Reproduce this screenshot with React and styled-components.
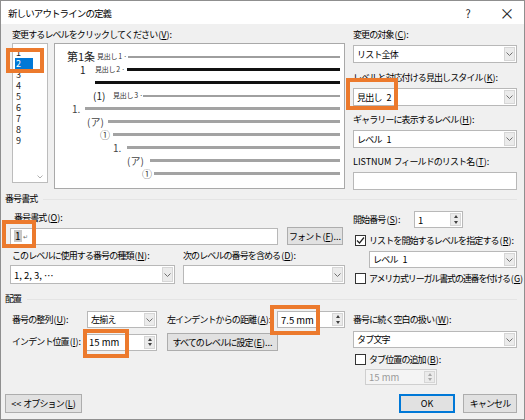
import React from 'react'
import styled, { createGlobalStyle } from 'styled-components'

const GlobalStyle = createGlobalStyle`
  html, body {
    margin: 0;
    padding: 0;
    background: #f0f0f0;
  }
  body {
    font-family: "Noto Sans CJK JP", "Noto Sans", sans-serif;
    font-size: 9px;
    letter-spacing: -0.9px;
    color: #000;
  }
  * {
    box-sizing: border-box;
  }
`

const Window = styled.div`
  width: 525px;
  height: 420px;
  background: #f0f0f0;
  border: 1px solid #8f8f8f;
  display: flex;
  flex-direction: column;
  overflow: hidden;
`

const TitleBar = styled.div`
  height: 23px;
  flex: none;
  background: #fff;
  display: flex;
  align-items: center;
  padding-left: 7px;
`

const TitleText = styled.div`
  flex: 1;
  font-size: 9.5px;
`

const TitleButton = styled.div`
  width: ${p => p.$w}px;
  text-align: center;
  font-size: ${p => p.$size}px;
  letter-spacing: 0;
  color: #222;
`

const Body = styled.div`
  flex: 1;
  display: flex;
  flex-direction: column;
  padding: 4px 7px 6px 11px;
`

const TwoCols = styled.div`
  display: grid;
  grid-template-columns: 333px 164px;
  column-gap: 8px;
  align-items: start;
`

const Col = styled.div`
  display: flex;
  flex-direction: column;
`

const Label = styled.div`
  line-height: 14px;
  height: 14px;
  white-space: nowrap;
  margin-left: ${p => p.$ml || 0}px;
  margin-top: ${p => p.$mt || 0}px;
  margin-bottom: ${p => p.$mb || 0}px;
  width: ${p => (p.$w ? p.$w + 'px' : 'auto')};
  flex: none;
`

const Lat = styled.span`
  letter-spacing: 0;
`

const KeyWrap = styled.span`
  letter-spacing: 0;
  margin-left: 1px;
  u {
    text-decoration: underline;
  }
`

const Key = ({ k, colon }) => (
  <KeyWrap>
    (<u>{k}</u>){colon ? ':' : ''}
  </KeyWrap>
)

const LevelRow = styled.div`
  display: flex;
  gap: 6px;
  margin-top: 1px;
`

const LevelList = styled.div`
  position: relative;
  width: 36px;
  height: 140px;
  background: #fff;
  border: 1px solid #bcbcbc;
  padding-top: 3px;
`

const LevelItem = styled.div`
  height: 11px;
  line-height: 11px;
  font-size: 9px;
  letter-spacing: 0;
  margin-left: 2px;
  padding-left: 1px;
  width: 18px;
  background: ${p => (p.$selected ? '#0078d7' : 'transparent')};
  color: ${p => (p.$selected ? '#fff' : '#222')};
`

const ListChevron = styled.div`
  position: absolute;
  right: 4px;
  bottom: 3px;
  display: flex;
`

const Preview = styled.div`
  flex: 1;
  height: 146px;
  background: #fff;
  border: 1px solid #a9a9a9;
  padding: 6px 4px 0 0;
`

const PreviewRow = styled.div`
  display: flex;
  align-items: center;
  height: 13px;
  padding-left: ${p => p.$indent}px;
`

const NumCell = styled.span`
  width: ${p => p.$w}px;
  flex: none;
  font-size: ${p => p.$size || 10}px;
  letter-spacing: 0;
  line-height: 13px;
  color: ${p => p.$color || '#444'};
  white-space: nowrap;
`

const TinyCell = styled.span`
  width: ${p => p.$w}px;
  flex: none;
  font-size: 7px;
  letter-spacing: -0.3px;
  line-height: 13px;
  color: #333;
  white-space: nowrap;
`

const Rule = styled.div`
  flex: 1;
  height: ${p => p.$thick}px;
  background: ${p => p.$color};
`

const Field = styled.div`
  display: flex;
  margin-bottom: ${p => p.$mb || 0}px;
  flex-direction: column;
`

const SelectBox = styled.div`
  position: relative;
  display: flex;
  height: ${p => p.$h || 18}px;
  width: ${p => (p.$w ? p.$w + 'px' : 'auto')};
  margin-left: ${p => p.$ml || 0}px;
  background: #fff;
  border: 1px solid #b8b8b8;
  flex: none;
`

const Value = styled.div`
  flex: 1;
  display: flex;
  align-items: center;
  padding-left: 3px;
  white-space: pre;
  font-size: ${p => (p.$latin ? '9.5px' : '9px')};
  letter-spacing: ${p => (p.$latin ? '0' : '-0.8px')};
  color: ${p => (p.$disabled ? '#9a9a9a' : '#000')};
`

const ArrowBox = styled.div`
  width: 11px;
  margin: 1px;
  background: #ebebeb;
  border: 1px solid #d6d6d6;
  display: flex;
  align-items: center;
  justify-content: center;
`

const SpinBox = styled(SelectBox)`
  background: ${p => (p.$disabled ? '#f4f4f4' : '#fff')};
  border-color: ${p => (p.$disabled ? '#cfcfcf' : '#b8b8b8')};
`

const SpinButtons = styled.div`
  width: 11px;
  margin: 1px;
  display: flex;
  flex-direction: column;
  background: #ebebeb;
  border: 1px solid #d6d6d6;
`

const SpinHalf = styled.div`
  flex: 1;
  display: flex;
  align-items: center;
  justify-content: center;
  &::before {
    content: '';
    border-left: 2.5px solid transparent;
    border-right: 2.5px solid transparent;
    ${p => (p.$up ? 'border-bottom' : 'border-top')}: 3px solid ${p => (p.$disabled ? '#a8a8a8' : '#404040')};
  }
`

const Button = styled.div`
  flex: none;
  width: ${p => p.$w}px;
  height: ${p => p.$h || 19}px;
  margin-left: ${p => p.$ml || 0}px;
  display: flex;
  align-items: center;
  justify-content: center;
  background: #e1e1e1;
  border: ${p => (p.$default ? '2px solid #0078d7' : '1px solid #adadad')};
  white-space: pre;
`

const Highlight = styled.div`
  position: absolute;
  left: ${p => p.$x}px;
  top: ${p => p.$y}px;
  width: ${p => p.$w}px;
  height: ${p => p.$h}px;
  border: 4px solid #ec7a2d;
  pointer-events: none;
`

const SectionHead = styled.div`
  display: flex;
  align-items: center;
  gap: 6px;
  margin-left: -7px;
  margin-top: ${p => p.$mt}px;
  margin-bottom: ${p => p.$mb}px;
  line-height: 14px;
  height: 14px;
  &::after {
    content: '';
    flex: 1;
    height: 1px;
    background: #e4e4e4;
  }
`

const Row = styled.div`
  display: flex;
  align-items: center;
  margin-left: ${p => p.$ml || 0}px;
  margin-top: ${p => p.$mt || 0}px;
  gap: ${p => p.$gap || 0}px;
`

const FormatInput = styled.div`
  position: relative;
  width: 268px;
  height: 17px;
  margin-left: -2px;
  background: #fff;
  border: 1px solid #b8b8b8;
  display: flex;
  align-items: center;
  padding-left: 3px;
`

const Shade = styled.span`
  background: #c8c8c8;
  font-size: 10px;
  letter-spacing: 0;
  line-height: 12px;
  padding: 0 1px;
`

const Caret = styled.span`
  font-size: 6px;
  color: #666;
  margin-left: 1px;
`

const CheckRow = styled.div`
  display: flex;
  align-items: center;
  height: 14px;
  margin-left: 2px;
  margin-top: ${p => p.$mt || 0}px;
  gap: 3px;
  white-space: nowrap;
  letter-spacing: ${p => (p.$tight ? '-1.15px' : '-0.9px')};
`

const CheckSquare = styled.div`
  width: 11px;
  height: 11px;
  flex: none;
  background: #fff;
  border: 1px solid #333;
  display: flex;
  align-items: center;
  justify-content: center;
`

const Footer = styled.div`
  margin-top: auto;
  display: flex;
  align-items: center;
`

const Spacer = styled.div`
  flex: 1;
`

const Chevron = () => (
  <svg width="7" height="4" viewBox="0 0 7 4">
    <path d="M0.5 0.5 L3.5 3.5 L6.5 0.5" fill="none" stroke="#707070" strokeWidth="1" />
  </svg>
)

const Select = ({ value, latin, w, h, ml, children }) => (
  <SelectBox $w={w} $h={h} $ml={ml}>
    <Value $latin={latin}>{value}</Value>
    <ArrowBox>
      <Chevron />
    </ArrowBox>
    {children}
  </SelectBox>
)

const Spin = ({ value, w, h, ml, disabled, children }) => (
  <SpinBox $w={w} $h={h} $ml={ml} $disabled={disabled}>
    <Value $latin $disabled={disabled}>{value}</Value>
    <SpinButtons>
      <SpinHalf $up $disabled={disabled} />
      <SpinHalf $disabled={disabled} />
    </SpinButtons>
    {children}
  </SpinBox>
)

const Check = ({ checked, children, mt, tight }) => (
  <CheckRow $mt={mt} $tight={tight}>
    <CheckSquare>
      {checked && (
        <svg width="9" height="9" viewBox="0 0 9 9">
          <path d="M1 4.5 L3.5 7 L8 1.5" fill="none" stroke="#222" strokeWidth="1.2" />
        </svg>
      )}
    </CheckSquare>
    <span>{children}</span>
  </CheckRow>
)

const previewRows = [
  { indent: 12, num: '第1条', numW: 30, size: 11, color: '#222', tiny: '見出し 1 ·', tinyW: 31, thick: 2, color2: '#9e9e9e' },
  { indent: 25, num: '1', numW: 15, size: 10, color: '#222', tiny: '見出し 2 ·', tinyW: 32, thick: 3, color2: '#111' },
  { indent: 40, thick: 3, color2: '#111' },
  { indent: 38, num: '(1)', numW: 20, size: 10, color: '#222', tiny: '見出し 3 ·', tinyW: 30, thick: 2, color2: '#a0a0a0' },
  { indent: 17, num: '1.', numW: 13, thick: 3, color2: '#a3a3a3' },
  { indent: 32, num: '(ア)', numW: 21, thick: 3, color2: '#a3a3a3' },
  { indent: 45, num: '①', numW: 13, thick: 3, color2: '#a3a3a3' },
  { indent: 58, num: '1.', numW: 14, thick: 3, color2: '#a3a3a3' },
  { indent: 72, num: '(ア)', numW: 23, thick: 3, color2: '#a3a3a3' },
  { indent: 87, num: '①', numW: 12, thick: 3, color2: '#a3a3a3' },
]

export default function App() {
  return (
    <>
      <GlobalStyle />
      <Window>
        <TitleBar>
          <TitleText>新しいアウトラインの定義</TitleText>
          <TitleButton $w={44} $size={11}>?</TitleButton>
          <TitleButton $w={34} $size={15}>×</TitleButton>
        </TitleBar>
        <Body>
          <TwoCols>
            <Col>
              <Label>変更するレベルをクリックしてください<Key k="V" colon /></Label>
              <LevelRow>
                <LevelList>
                  {[1, 2, 3, 4, 5, 6, 7, 8, 9].map(n => (
                    <LevelItem key={n} $selected={n === 2}>{n}</LevelItem>
                  ))}
                  <ListChevron>
                    <svg width="6" height="4" viewBox="0 0 6 4">
                      <path d="M0.5 0.5 L3 3 L5.5 0.5" fill="none" stroke="#b0b0b0" strokeWidth="1" />
                    </svg>
                  </ListChevron>
                  <Highlight $x={-7} $y={4} $w={38} $h={25} />
                </LevelList>
                <Preview>
                  {previewRows.map((r, i) => (
                    <PreviewRow key={i} $indent={r.indent}>
                      {r.num && (
                        <NumCell $w={r.numW} $size={r.size} $color={r.color}>{r.num}</NumCell>
                      )}
                      {r.tiny && <TinyCell $w={r.tinyW}>{r.tiny}</TinyCell>}
                      <Rule $thick={r.thick} $color={r.color2} />
                    </PreviewRow>
                  ))}
                </Preview>
              </LevelRow>
            </Col>
            <Col>
              <Field $mb={8}>
                <Label $mb={3}>変更の対象<Key k="C" colon /></Label>
                <Select value="リスト全体" />
              </Field>
              <Field $mb={7}>
                <Label $mb={3}>レベルと対応付ける見出しスタイル<Key k="K" colon /></Label>
                <Select value={'見出し\u2002 2'}>
                  <Highlight $x={-8} $y={-11} $w={52} $h={32} />
                </Select>
              </Field>
              <Field $mb={7}>
                <Label $mb={3}>ギャラリーに表示するレベル<Key k="H" colon /></Label>
                <Select value={'レベル\u2002 1'} />
              </Field>
              <Field>
                <Label $mb={3}><Lat>LISTNUM </Lat>フィールドのリスト名<Key k="T" colon /></Label>
                <SelectBox />
              </Field>
            </Col>
          </TwoCols>

          <SectionHead $mt={2} $mb={5}>番号書式</SectionHead>
          <TwoCols>
            <Col>
              <Label $ml={2} $mb={2}>番号書式<Key k="O" colon /></Label>
              <Row $gap={8}>
                <FormatInput>
                  <Shade>1</Shade>
                  <Caret>↵</Caret>
                  <Highlight $x={-9} $y={-9} $w={34} $h={28} />
                </FormatInput>
                <Button $w={56} $h={18} $ml={1}>フォント<Key k="F" /><Lat>...</Lat></Button>
              </Row>
              <Row $mt={4}>
                <Label $w={171}>このレベルに使用する番号の種類<Key k="N" colon /></Label>
                <Label>次のレベルの番号を含める<Key k="D" colon /></Label>
              </Row>
              <Row $mt={2} $ml={-2} $gap={8}>
                <Select value="1, 2, 3, …" latin w={165} h={19} />
                <Select value="" w={162} h={19} />
              </Row>
            </Col>
            <Col>
              <Row>
                <Label $w={61}>開始番号<Key k="S" colon /></Label>
                <Spin value="1" w={49} h={17} />
              </Row>
              <Check checked mt={5}>リストを開始するレベルを指定する<Key k="R" colon /></Check>
              <Row $mt={4}>
                <Select value={'レベル\u2002 1'} w={148} h={17} ml={16} />
              </Row>
              <Check mt={3} tight>アメリカ式リーガル書式の連番を付ける<Key k="G" /></Check>
            </Col>
          </TwoCols>

          <SectionHead $mt={7} $mb={5}>配置</SectionHead>
          <TwoCols>
            <Col>
              <Row>
                <Label $w={75}>番号の整列<Key k="U" colon /></Label>
                <Select value="左揃え" w={70} h={17} />
                <Label $w={110} $ml={10}>左インデントからの距離<Key k="A" colon /></Label>
                <Spin value="7.5 mm" w={68} h={17}>
                  <Highlight $x={-8} $y={-7} $w={50} $h={30} />
                </Spin>
              </Row>
              <Row $mt={5}>
                <Label $w={73}>インデント位置<Key k="I" colon /></Label>
                <Spin value="15 mm" w={72} h={17}>
                  <Highlight $x={-3} $y={-6} $w={46} $h={29} />
                </Spin>
                <Button $w={111} $h={18} $ml={10}>すべてのレベルに設定<Key k="E" /><Lat>...</Lat></Button>
              </Row>
            </Col>
            <Col>
              <Label $mt={2} $mb={4}>番号に続く空白の扱い<Key k="W" colon /></Label>
              <Select value="タブ文字" h={17} />
              <Check mt={4}>タブ位置の追加<Key k="B" colon /></Check>
              <Row $mt={3}>
                <Spin value="15 mm" w={72} h={16} ml={12} disabled />
              </Row>
            </Col>
          </TwoCols>

          <Footer>
            <Button $w={77} $ml={-7}><Lat>{'<< '}</Lat>オプション<Key k="L" /></Button>
            <Spacer />
            <Button $w={56} $default><Lat>OK</Lat></Button>
            <Button $w={54} $ml={8}>キャンセル</Button>
          </Footer>
        </Body>
      </Window>
    </>
  )
}
